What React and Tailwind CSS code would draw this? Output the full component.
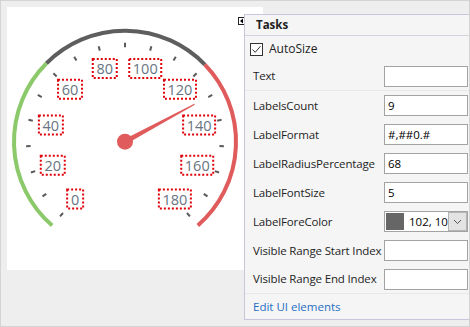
import React from "react";

const CX = 118;
const CY = 134.7;
const R = 111;
const START = 131;
const SWEEP = 278;

function pt(deg, r) {
  const a = (deg * Math.PI) / 180;
  return [CX + r * Math.cos(a), CY + r * Math.sin(a)];
}

function arc(a0, a1, r) {
  const [x0, y0] = pt(a0, r);
  const [x1, y1] = pt(a1, r);
  const large = a1 - a0 > 180 ? 1 : 0;
  return `M ${x0} ${y0} A ${r} ${r} 0 ${large} 1 ${x1} ${y1}`;
}

function Gauge() {
  const ticks = Array.from({ length: 19 }, (_, i) => START + (SWEEP / 18) * i);
  const labels = Array.from({ length: 10 }, (_, k) => ({
    v: String(k * 20),
    a: START + (SWEEP / 9) * k,
  }));
  const widths = { 1: 18, 2: 26, 3: 34 };
  const na = -28.3;
  const [tx, ty] = pt(na, 79);
  const [b1x, b1y] = pt(na - 90, 2.6);
  const [b2x, b2y] = pt(na + 90, 2.6);
  const tipA = [tx + 0.6 * Math.cos(((na - 90) * Math.PI) / 180), ty + 0.6 * Math.sin(((na - 90) * Math.PI) / 180)];
  const tipB = [tx + 0.6 * Math.cos(((na + 90) * Math.PI) / 180), ty + 0.6 * Math.sin(((na + 90) * Math.PI) / 180)];

  return (
    <svg width="256" height="263" className="block">
      <path d={arc(131, 225, R)} stroke="#8cc96b" strokeWidth="4" fill="none" />
      <path d={arc(225, 316, R)} stroke="#5e5e5e" strokeWidth="4" fill="none" />
      <path d={arc(316, 409, R)} stroke="#e05b5c" strokeWidth="4" fill="none" />
      {ticks.map((a, i) => {
        const [x0, y0] = pt(a, 94.5);
        const [x1, y1] = pt(a, 99);
        return <line key={i} x1={x0} y1={y0} x2={x1} y2={y1} stroke="#5a5a5a" strokeWidth="2" />;
      })}
      {labels.map(({ v, a }) => {
        const [x, y] = pt(a, 76);
        const w = widths[v.length];
        return (
          <g key={v}>
            <rect x={x - w / 2 + 1} y={y - 9.5} width={w - 2} height={19} fill="none" stroke="#e0000a" strokeWidth="2" strokeDasharray="2 2" />
            <text x={x} y={y + 0.5} textAnchor="middle" dominantBaseline="central" fontSize="14.5" fill="#687482" fontFamily="'Open Sans', sans-serif">
              {v}
            </text>
          </g>
        );
      })}
      <polygon points={`${b1x},${b1y} ${tipA[0]},${tipA[1]} ${tipB[0]},${tipB[1]} ${b2x},${b2y}`} fill="#e05b5c" />
      <circle cx={CX} cy={CY} r="8" fill="#e05b5c" />
    </svg>
  );
}

function Row({ label, children, last }) {
  return (
    <div className={`flex h-[29px] items-center pl-[8px] ${last ? "border-b border-[#e8e8ec]" : ""}`}>
      <span className="whitespace-nowrap text-[11.5px] tracking-[-0.15px] text-[#1e1e1e]">{label}</span>
      <div className="ml-auto mr-[1px] shrink-0">{children}</div>
    </div>
  );
}

function Field({ value }) {
  return (
    <div className="flex h-[21px] w-[84px] items-center border border-[#a3a3a3] bg-white pl-[3px] text-[11.5px] text-black">
      {value}
    </div>
  );
}

export default function App() {
  return (
    <div className="relative h-[327px] w-[470px] border border-[#d4d4d4] bg-[#eeeeee] p-[6px]" style={{ fontFamily: "'Open Sans', 'Noto Sans', sans-serif" }}>
      <div className="h-[263px] w-[256px] bg-white">
        <Gauge />
      </div>

      <svg className="absolute left-[237px] top-[16px]" width="7" height="8">
        <rect x="0.5" y="0.5" width="6" height="7" fill="white" stroke="#222" />
        <polygon points="5,1.5 5,6.5 2,4" fill="#000" />
      </svg>

      <div className="absolute bottom-[6px] left-[243px] right-0 top-[13px] flex flex-col border-b border-l border-t border-[#c6c6dc] bg-[#f5f5f5]">
        <div className="flex h-[21px] items-center border-b border-[#d4d4de] pl-[11px] text-[11.5px] font-bold text-[#1e1e1e]">
          Tasks
        </div>
        <div className="flex h-[26px] items-center pl-[5px]">
          <div className="flex h-[13px] w-[13px] items-center justify-center border border-[#333] bg-white">
            <svg width="11" height="11" viewBox="0 0 11 11">
              <path d="M1.5 5.5 L4.2 8.3 L9.5 2.2" stroke="#333" strokeWidth="1" fill="none" />
            </svg>
          </div>
          <span className="ml-[6px] text-[12px] text-[#1e1e1e]">AutoSize</span>
        </div>
        <Row label="Text" last>
          <Field value="" />
        </Row>
        <Row label="LabelsCount">
          <Field value="9" />
        </Row>
        <Row label="LabelFormat">
          <Field value="#,##0.#" />
        </Row>
        <Row label="LabelRadiusPercentage">
          <Field value="68" />
        </Row>
        <Row label="LabelFontSize">
          <Field value="5" />
        </Row>
        <Row label="LabelForeColor">
          <div className="flex h-[21px] w-[84px] items-center border border-[#a3a3a3] bg-white">
            <div className="ml-[1px] h-[17px] w-[18px] shrink-0 bg-[#666666]" />
            <span className="ml-[5px] w-[39px] overflow-hidden whitespace-nowrap text-[11.5px] text-black">102, 102, 102</span>
            <div className="ml-auto flex h-[19px] w-[19px] shrink-0 items-center justify-center border border-[#b4b4b4] bg-[#e3e3e3]">
              <svg width="9" height="6" viewBox="0 0 9 6">
                <path d="M1 1 L4.5 4.5 L8 1" stroke="#555" strokeWidth="1" fill="none" />
              </svg>
            </div>
          </div>
        </Row>
        <Row label="Visible Range Start Index">
          <Field value="" />
        </Row>
        <Row label="Visible Range End Index" last>
          <Field value="" />
        </Row>
        <div className="flex flex-1 items-center pl-[8px] text-[11.5px] text-[#1f6fc6]">Edit UI elements</div>
      </div>
    </div>
  );
}
